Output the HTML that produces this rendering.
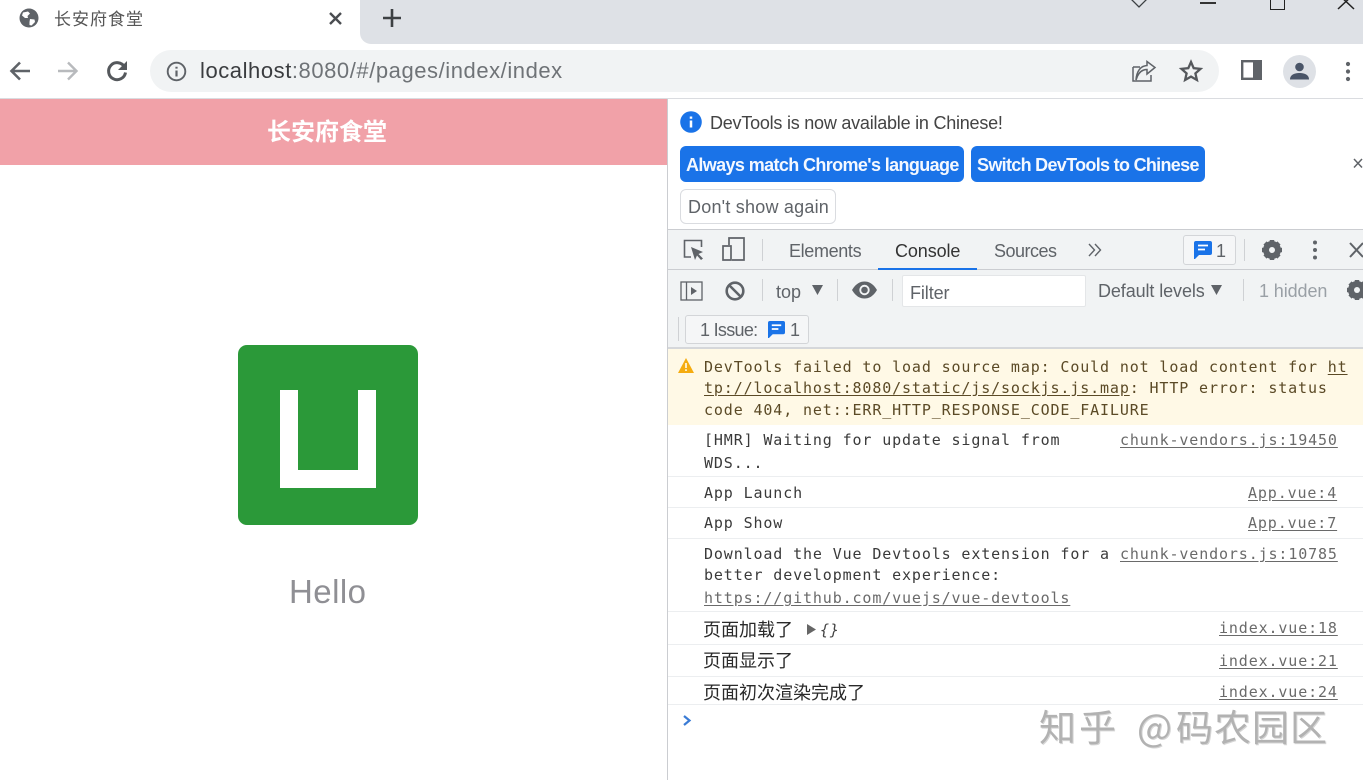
<!DOCTYPE html>
<html lang="zh"><head><meta charset="utf-8"><title>长安府食堂</title>
<style>
html,body{margin:0;padding:0;width:1363px;height:780px;overflow:hidden;background:#fff}
body{position:relative;font-family:"Liberation Sans","Noto Sans CJK SC",sans-serif;color:#5f6368}
.a{position:absolute}
.t{position:absolute;white-space:nowrap;line-height:20px}
.m{position:absolute;white-space:pre;font-family:"DejaVu Sans Mono","Liberation Mono","Noto Sans CJK SC",monospace;font-size:15px;letter-spacing:.87px;line-height:20px;color:#3a3a3a}
.m u,.l{text-decoration:underline;text-underline-offset:2px}
.l{color:#6a6a6a}
.w{color:#5b4a26}
.c{position:absolute;white-space:nowrap;font-size:18px;line-height:22px;color:#2a2a2a;font-family:"Noto Sans CJK SC",sans-serif}
.r{left:668px;width:695px;height:1px;background:#eceef0}
svg{position:absolute;overflow:visible}
.wm{position:absolute;white-space:nowrap;font-size:37px;line-height:42px;top:704px;color:#b2b2b2;text-shadow:1px 1px 0 #d6d6d6;font-family:"Noto Sans CJK SC",sans-serif}
</style></head><body>

<div class="a" style="left:0;top:0;width:1363px;height:44px;background:#dee1e6"></div>
<div class="a" style="left:0;top:0;width:372px;height:44px;background:#fff"></div>
<div class="a" style="left:360px;top:0;width:12px;height:44px;background:#dee1e6;border-bottom-left-radius:11px"></div>
<div class="a" style="left:0;top:44px;width:1363px;height:54px;background:#fff"></div>
<div class="a" style="left:0;top:98px;width:1363px;height:1px;background:#dadce0"></div>

<svg style="left:19px;top:8px" width="20" height="20" viewBox="0 0 20 20"><circle cx="10" cy="10" r="9.5" fill="#5f6368"/><path d="M4 4.500 9 3.500 11 5.500 8.500 8 9 10 6 10 3 7.500zM11 11 15.500 11.500 16 14 12.500 17.500 10.500 17 10.500 14z" fill="#fff"/></svg>
<div class="t" style="left:54px;top:10px;font-size:17px;color:#555;letter-spacing:1px">长安府食堂</div>
<svg style="left:329px;top:12px" width="13" height="13" viewBox="0 0 13 13"><path d="M1 1 12 12M12 1 1 12" stroke="#4a4d51" stroke-width="2.400"/></svg>
<svg style="left:383px;top:9px" width="18" height="18" viewBox="0 0 18 18"><path d="M9 0V18M0 9H18" stroke="#3c4043" stroke-width="2.600"/></svg>

<svg style="left:1130px;top:-9px" width="18" height="18" viewBox="0 0 18 18"><path d="M1 8 9 16 17 8 9 0z" fill="none" stroke="#3c4043" stroke-width="1.300"/></svg>
<div class="a" style="left:1200px;top:2px;width:16px;height:2px;background:#333"></div>
<div class="a" style="left:1270px;top:-5px;width:13px;height:13px;border:1.600px solid #222"></div>
<svg style="left:1338px;top:-6px" width="16" height="16" viewBox="0 0 16 16"><path d="M0 0 16 15M16 0 0 15" stroke="#222" stroke-width="1.500"/></svg>

<svg style="left:8px;top:59px" width="24" height="24" viewBox="0 0 24 24"><path d="M22 12H4M12 3.500 3.500 12 12 20.500" fill="none" stroke="#5f6368" stroke-width="2.600"/></svg>
<svg style="left:56px;top:59px" width="24" height="24" viewBox="0 0 24 24"><path d="M2 12H20M12 3.500 20.500 12 12 20.500" fill="none" stroke="#b8babd" stroke-width="2.400"/></svg>
<svg style="left:105px;top:59px" width="24" height="24" viewBox="0 0 24 24"><path d="M19.500 8A8.500 8.500 0 1 0 20.500 13.500" fill="none" stroke="#55585c" stroke-width="3"/><path d="M22 2V11H13z" fill="#55585c"/></svg>

<div class="a" style="left:150px;top:50px;width:1069px;height:42px;border-radius:21px;background:#f1f3f4"></div>
<svg style="left:166px;top:61px" width="21" height="21" viewBox="0 0 21 21"><circle cx="10.500" cy="10.500" r="8.800" fill="none" stroke="#5f6368" stroke-width="1.900"/><path d="M10.500 9.500V15.500M10.500 5.800V7.600" stroke="#5f6368" stroke-width="2.200"/></svg>
<div class="t" style="left:200px;top:60px;font-size:22px;line-height:22px;color:#6f7377;letter-spacing:.56px"><span style="color:#3a3c3f">localhost</span>:8080/#/pages/index/index</div>

<svg style="left:1132px;top:60px" width="24" height="23" viewBox="0 0 24 23"><path d="M1 7V21H19V15M1 7H8M4 20C6 13 10 9.500 15 9.500V14L23 7.500 15 1.500V5.500C8 6 4.500 12 4 20" fill="none" stroke="#5f6368" stroke-width="1.500"/></svg>
<svg style="left:1180px;top:60px" width="22" height="22" viewBox="0 0 22 22"><path d="M11 2 13.700 8.200 20.500 8.900 15.400 13.400 16.900 20 11 16.600 5.100 20 6.600 13.400 1.500 8.900 8.300 8.200z" fill="none" stroke="#55585c" stroke-width="2.300"/></svg>
<svg style="left:1241px;top:60px" width="22" height="21" viewBox="0 0 22 21"><rect x="1.200" y="1.200" width="18.600" height="17.600" fill="none" stroke="#5f6368" stroke-width="2.400"/><rect x="12" y="1" width="8" height="18" fill="#5f6368"/></svg>
<div class="a" style="left:1283px;top:55px;width:33px;height:33px;border-radius:50%;background:#dee1e6"></div>
<svg style="left:1289px;top:61px" width="21" height="21" viewBox="0 0 21 21"><circle cx="10.500" cy="6" r="4.300" fill="#4a5568"/><path d="M1 18.500C1 13.500 6 12 10.500 12S20 13.500 20 18.500z" fill="#4a5568"/></svg>
<svg style="left:1345px;top:61px" width="6" height="22" viewBox="0 0 6 22"><circle cx="3" cy="3" r="2.100" fill="#5f6368"/><circle cx="3" cy="10.500" r="2.100" fill="#5f6368"/><circle cx="3" cy="18" r="2.100" fill="#5f6368"/></svg>

<div class="a" style="left:0;top:99px;width:667px;height:66px;background:#f1a1a8"></div>
<div class="t" style="left:267px;top:119px;font-size:24px;line-height:28px;color:#fff;font-weight:700">长安府食堂</div>
<div class="a" style="left:238px;top:345px;width:180px;height:180px;border-radius:9px;background:#2b9939"></div>
<svg style="left:238px;top:345px" width="180" height="180" viewBox="0 0 180 180"><path d="M42 45H60V125H120V45H138V143H42z" fill="#fff"/></svg>
<div class="t" style="left:289px;top:574px;font-size:33px;line-height:36px;color:#8f8f94;letter-spacing:.45px">Hello</div>

<div class="a" style="left:667px;top:99px;width:1px;height:681px;background:#cbcdd1"></div>

<svg style="left:680px;top:111px" width="22" height="22" viewBox="0 0 22 22"><circle cx="11" cy="11" r="10.800" fill="#1a73e8"/><path d="M11 9.500V16.500M11 5.500V7.700" stroke="#fff" stroke-width="2.500"/></svg>
<div class="t" style="left:710px;top:113px;font-size:18px;color:#444;letter-spacing:-.23px">DevTools is now available in Chinese!</div>
<div class="a" style="left:680px;top:146px;width:284px;height:36px;border-radius:6px;background:#1a73e8"></div>
<div class="t" style="left:686px;top:155px;font-size:18px;font-weight:700;color:#f4f8ff;letter-spacing:-.62px">Always match Chrome's language</div>
<div class="a" style="left:971px;top:146px;width:234px;height:36px;border-radius:6px;background:#1a73e8"></div>
<div class="t" style="left:977px;top:155px;font-size:18px;font-weight:700;color:#f4f8ff;letter-spacing:-.69px">Switch DevTools to Chinese</div>
<div class="a" style="left:680px;top:189px;width:154px;height:33px;border-radius:6px;border:1px solid #dadce0;background:#fff"></div>
<div class="t" style="left:688px;top:197px;font-size:18px;color:#5f6368;letter-spacing:.22px">Don't show again</div>
<svg style="left:1354px;top:158px" width="9" height="11" viewBox="0 0 9 11"><path d="M0 1 8 9.500M8 1 0 9.500" stroke="#5f6368" stroke-width="1.500"/></svg>

<div class="a" style="left:668px;top:229px;width:695px;height:120px;background:#f1f3f4"></div>
<div class="a" style="left:668px;top:229px;width:695px;height:1px;background:#cbcdd1"></div>
<div class="a" style="left:668px;top:269px;width:695px;height:1px;background:#cbcdd1"></div>
<div class="a" style="left:668px;top:347px;width:695px;height:2px;background:#d5d7da"></div>

<svg style="left:683px;top:239px" width="22" height="22" viewBox="0 0 22 22"><path d="M8 18H1.500V1.500H18.500V8" fill="none" stroke="#5f6368" stroke-width="1.600"/><path d="M8 8 20 13 15.500 15 20 19.500 18 21 14 16.500 12 21z" fill="#5f6368"/></svg>
<svg style="left:722px;top:237px" width="24" height="25" viewBox="0 0 24 25"><path d="M7 8V1H22V23H10M1 9H9V23H1z" fill="none" stroke="#5f6368" stroke-width="1.700"/></svg>
<div class="a" style="left:762px;top:239px;width:1px;height:22px;background:#cfd1d4"></div>
<div class="t" style="left:789px;top:241px;font-size:18px;color:#5f6368;letter-spacing:-.35px">Elements</div>
<div class="t" style="left:895px;top:241px;font-size:18px;color:#333;letter-spacing:-.1px">Console</div>
<div class="t" style="left:994px;top:241px;font-size:18px;color:#5f6368;letter-spacing:-.5px">Sources</div>
<div class="a" style="left:878px;top:268px;width:99px;height:2px;background:#1a73e8"></div>
<svg style="left:1088px;top:243px" width="14" height="14" viewBox="0 0 14 14"><path d="M1 1 6.500 7 1 13M7 1 12.500 7 7 13" fill="none" stroke="#5f6368" stroke-width="1.400"/></svg>
<div class="a" style="left:1183px;top:235px;width:51px;height:28px;border:1px solid #d3d5d8;border-radius:3px;background:#f5f6f7"></div>
<svg style="left:1194px;top:241px" width="18" height="18" viewBox="0 0 18 18"><path d="M2 0H16Q18 0 18 2V12Q18 14 16 14H5L1 18H0V2Q0 0 2 0z" fill="#1a73e8"/><path d="M4 4.500H14M4 8.500H11" stroke="#fff" stroke-width="1.800"/></svg>
<div class="t" style="left:1216px;top:241px;font-size:18px;color:#5f6368">1</div>
<div class="a" style="left:1244px;top:239px;width:1px;height:22px;background:#cfd1d4"></div>
<svg style="left:1261px;top:239px" width="22" height="22" viewBox="0 0 22 22"><circle cx="11" cy="11" r="6.500" fill="none" stroke="#5f6368" stroke-width="5"/><path d="M11 1V21M1 11H21M4 4 18 18M18 4 4 18" stroke="#5f6368" stroke-width="4.500"/><circle cx="11" cy="11" r="3" fill="#f1f3f4"/></svg>
<svg style="left:1312px;top:240px" width="6" height="20" viewBox="0 0 6 20"><circle cx="3" cy="2.500" r="2" fill="#5f6368"/><circle cx="3" cy="10" r="2" fill="#5f6368"/><circle cx="3" cy="17.500" r="2" fill="#5f6368"/></svg>
<svg style="left:1349px;top:243px" width="14" height="14" viewBox="0 0 14 14"><path d="M1 0 14 14M14 0 1 14" stroke="#5f6368" stroke-width="2"/></svg>

<svg style="left:680px;top:281px" width="23" height="20" viewBox="0 0 23 20"><rect x="1" y="1" width="21" height="18" fill="none" stroke="#5f6368" stroke-width="1.300"/><path d="M6.500 1V19" stroke="#5f6368" stroke-width="1.300"/><path d="M11 6 17 10 11 14z" fill="#5f6368"/></svg>
<svg style="left:725px;top:281px" width="20" height="20" viewBox="0 0 20 20"><circle cx="10" cy="10" r="8.300" fill="none" stroke="#5f6368" stroke-width="2.600"/><path d="M4 4 16 16" stroke="#5f6368" stroke-width="2.600"/></svg>
<div class="a" style="left:762px;top:279px;width:1px;height:22px;background:#cfd1d4"></div>
<div class="t" style="left:776px;top:282px;font-size:18px;color:#5f6368">top</div>
<svg style="left:812px;top:285px" width="11" height="10" viewBox="0 0 11 10"><path d="M0 0H11L5.500 10z" fill="#5f6368"/></svg>
<div class="a" style="left:837px;top:279px;width:1px;height:22px;background:#cfd1d4"></div>
<svg style="left:852px;top:281px" width="25" height="18" viewBox="0 0 25 18"><path d="M0 9C4 2.500 8 .5 12.500 .5S21 2.500 25 9C21 15.500 17 17.500 12.500 17.500S4 15.500 0 9z" fill="#5f6368"/><circle cx="12.500" cy="9" r="5.200" fill="#f1f3f4"/><circle cx="12.500" cy="9" r="3.300" fill="#5f6368"/></svg>
<div class="a" style="left:892px;top:279px;width:1px;height:22px;background:#cfd1d4"></div>
<div class="a" style="left:902px;top:275px;width:182px;height:30px;background:#fff;border:1px solid #e4e6e8;border-radius:2px"></div>
<div class="t" style="left:910px;top:283px;font-size:18px;color:#5f6368;letter-spacing:-.1px">Filter</div>
<div class="t" style="left:1098px;top:281px;font-size:18px;color:#5f6368;letter-spacing:-.1px">Default levels</div>
<svg style="left:1211px;top:285px" width="11" height="10" viewBox="0 0 11 10"><path d="M0 0H11L5.500 10z" fill="#5f6368"/></svg>
<div class="a" style="left:1243px;top:279px;width:1px;height:22px;background:#cfd1d4"></div>
<div class="t" style="left:1259px;top:281px;font-size:18px;color:#9aa0a6;letter-spacing:-.1px">1 hidden</div>
<svg style="left:1346px;top:279px" width="22" height="22" viewBox="0 0 22 22"><circle cx="11" cy="11" r="6.500" fill="none" stroke="#5f6368" stroke-width="5"/><path d="M11 1V21M1 11H21M4 4 18 18M18 4 4 18" stroke="#5f6368" stroke-width="4.500"/><circle cx="11" cy="11" r="3" fill="#f1f3f4"/></svg>

<div class="a" style="left:678px;top:317px;width:1px;height:24px;background:#cfd1d4"></div>
<div class="a" style="left:685px;top:315px;width:122px;height:27px;border:1px solid #d3d5d8;border-radius:3px;background:#f5f6f7"></div>
<div class="t" style="left:700px;top:320px;font-size:18px;color:#5f6368;letter-spacing:-.7px">1 Issue:</div>
<svg style="left:768px;top:321px" width="17" height="17" viewBox="0 0 18 18"><path d="M2 0H16Q18 0 18 2V12Q18 14 16 14H5L1 18H0V2Q0 0 2 0z" fill="#1a73e8"/><path d="M4 4.500H14M4 8.500H11" stroke="#fff" stroke-width="1.800"/></svg>
<div class="t" style="left:790px;top:320px;font-size:18px;color:#5f6368">1</div>

<div class="a" style="left:668px;top:349px;width:695px;height:76px;background:#fff9e6"></div>
<svg style="left:678px;top:358px" width="16" height="15" viewBox="0 0 16 15"><path d="M8 0 16 15H0z" fill="#f5ac10"/><path d="M8 5V10M8 11.200V13" stroke="#fff8e5" stroke-width="1.700"/></svg>
<div class="m w" style="left:704px;top:357px">DevTools failed to load source map: Could not load content for <u>ht</u></div>
<div class="m w" style="left:704px;top:378px"><u>tp://localhost:8080/static/js/sockjs.js.map</u>: HTTP error: status</div>
<div class="m w" style="left:704px;top:400px">code 404, net::ERR_HTTP_RESPONSE_CODE_FAILURE</div>

<div class="m" style="left:704px;top:430px">[HMR] Waiting for update signal from</div>
<div class="m" style="left:704px;top:453px">WDS...</div>
<div class="m l" style="left:1120px;top:430px">chunk-vendors.js:19450</div>
<div class="a r" style="top:476px"></div>
<div class="m" style="left:704px;top:483px">App Launch</div>
<div class="m l" style="left:1248px;top:483px">App.vue:4</div>
<div class="a r" style="top:507px"></div>
<div class="m" style="left:704px;top:513px">App Show</div>
<div class="m l" style="left:1248px;top:513px">App.vue:7</div>
<div class="a r" style="top:538px"></div>
<div class="m" style="left:704px;top:544px">Download the Vue Devtools extension for a</div>
<div class="m l" style="left:1120px;top:544px">chunk-vendors.js:10785</div>
<div class="m" style="left:704px;top:565px">better development experience:</div>
<div class="m l" style="left:704px;top:588px">https://github.com/vuejs/vue-devtools</div>
<div class="a r" style="top:611px"></div>
<div class="c" style="left:703px;top:618px">页面加载了</div>
<svg style="left:807px;top:624px" width="10" height="11" viewBox="0 0 10 11"><path d="M0 0 9 5.500 0 11z" fill="#666"/></svg>
<div class="m" style="left:820px;top:620px;font-style:italic;color:#444">{}</div>
<div class="m l" style="left:1219px;top:618px">index.vue:18</div>
<div class="a r" style="top:644px"></div>
<div class="c" style="left:703px;top:649px">页面显示了</div>
<div class="m l" style="left:1219px;top:651px">index.vue:21</div>
<div class="a r" style="top:676px"></div>
<div class="c" style="left:703px;top:681px">页面初次渲染完成了</div>
<div class="m l" style="left:1219px;top:682px">index.vue:24</div>
<div class="a r" style="top:704px"></div>
<svg style="left:682px;top:714px" width="10" height="13" viewBox="0 0 10 13"><path d="M2 2 7.500 6.500 2 11" fill="none" stroke="#3a7bd5" stroke-width="2.200"/></svg>

<div class="wm" style="left:1039px;letter-spacing:3px">知乎</div>
<div class="wm" style="left:1137px">@</div>
<div class="wm" style="left:1176px;letter-spacing:1px">码农园区</div>

</body></html>
